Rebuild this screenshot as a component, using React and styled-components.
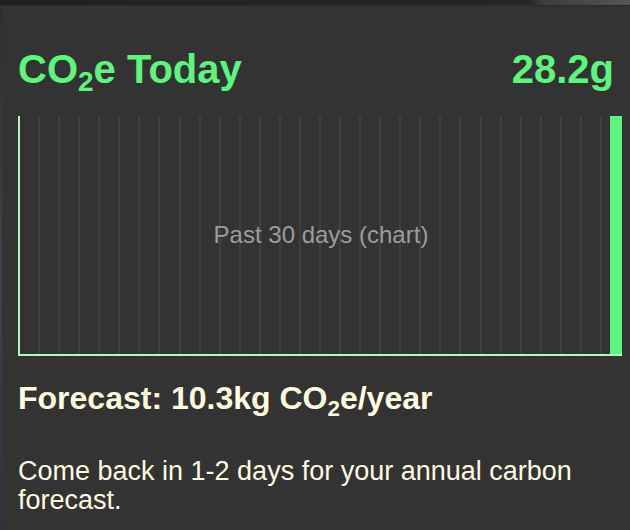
import React from 'react';
import styled, { createGlobalStyle } from 'styled-components';

const GlobalStyle = createGlobalStyle`
  html, body {
    margin: 0;
    padding: 0;
    background: #333333;
  }
  body {
    font-family: "Liberation Sans", Arial, sans-serif;
  }
`;

const DAYS = Array.from({ length: 30 }, (_, i) => (i === 29 ? 100 : 0));

const App = () => (
  <>
    <GlobalStyle />
    <Frame>
      <TopStrip />
      <Body>
        <EdgeStrip />
        <Panel>
          <Header>
            <Title>
              CO<Sub>2</Sub>e Today
            </Title>
            <Title>28.2g</Title>
          </Header>
          <Chart>
            {DAYS.map((v, i) => (
              <Column key={i} $last={i === DAYS.length - 1}>
                {v > 0 && <Bar style={{ height: `${v}%` }} />}
              </Column>
            ))}
            <ChartLabel>Past 30 days (chart)</ChartLabel>
          </Chart>
          <Forecast>
            Forecast: 10.3kg CO<Sub>2</Sub>e/year
          </Forecast>
          <Note>Come back in 1-2 days for your annual carbon forecast.</Note>
        </Panel>
      </Body>
    </Frame>
  </>
);

const Frame = styled.div`
  width: 630px;
  height: 530px;
  display: flex;
  flex-direction: column;
  overflow: hidden;
  background: #333333;
`;

const TopStrip = styled.div`
  height: 5px;
  flex-shrink: 0;
  background: linear-gradient(90deg, #1f2125 0%, #23262b 84%, #3a3c40 86%, #555 100%);
  border-bottom: 1px solid #2a2a2a;
`;

const Body = styled.div`
  flex: 1;
  display: flex;
`;

const EdgeStrip = styled.div`
  width: 2px;
  background: linear-gradient(180deg, #2f2f2f 0%, #3b4250 50%, #2c3340 100%);
`;

const Panel = styled.div`
  flex: 1;
  padding: 38px 8px 0 16px;
  display: flex;
  flex-direction: column;
`;

const Header = styled.div`
  display: flex;
  justify-content: space-between;
  align-items: baseline;
  padding-right: 8px;
`;

const Title = styled.h1`
  margin: 0;
  font-size: 40px;
  font-weight: 700;
  line-height: 50px;
  color: #5ef47e;
`;

const Sub = styled.sub`
  font-size: 0.7em;
  vertical-align: -0.3em;
  line-height: 0;
`;

const Chart = styled.div`
  position: relative;
  margin-top: 22px;
  width: 602px;
  height: 238px;
  display: grid;
  grid-template-columns: repeat(30, 1fr);
  border-left: 2px solid #b6f5c4;
  border-bottom: 2px solid #b6f5c4;
`;

const Column = styled.div`
  position: relative;
  display: flex;
  align-items: flex-end;
  justify-content: flex-end;
  border-right: ${({ $last }) => ($last ? 'none' : '2px solid #3f3f3f')};
`;

const Bar = styled.div`
  width: 12px;
  background: #5ef47e;
`;

const ChartLabel = styled.div`
  position: absolute;
  inset: 0;
  display: flex;
  align-items: center;
  justify-content: center;
  font-size: 24px;
  color: #9c9c9c;
  pointer-events: none;
`;

const Forecast = styled.h2`
  margin: 20px 0 0;
  font-size: 32px;
  font-weight: 700;
  line-height: 44px;
  color: #fffbe0;
`;

const Note = styled.p`
  margin: 37px 0 0;
  font-size: 27px;
  line-height: 29px;
  color: #fffbe0;
`;

export default App;
